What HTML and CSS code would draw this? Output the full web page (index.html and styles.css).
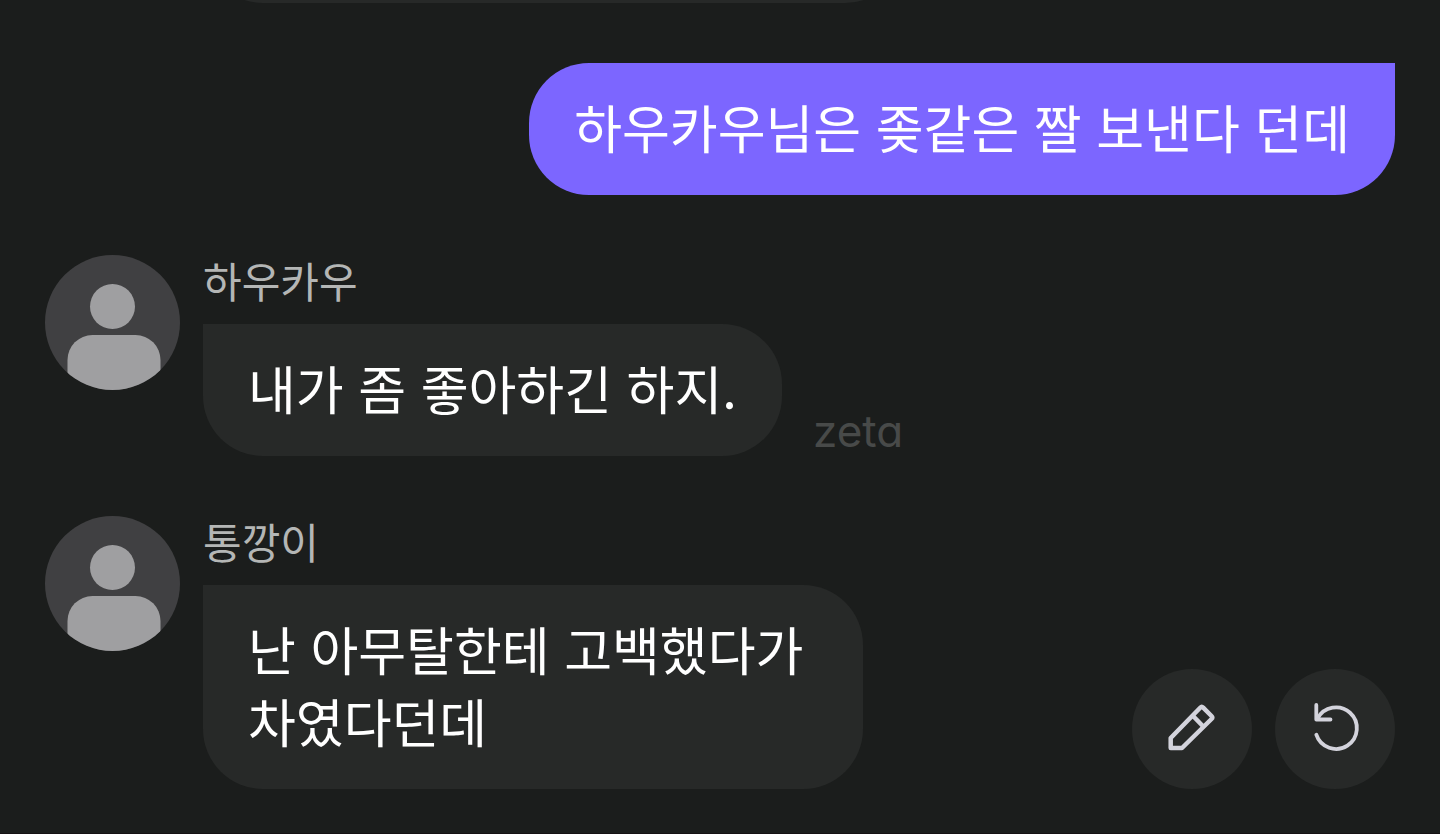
FILE: index.html
```html
<!DOCTYPE html>
<html lang="ko">
<head>
    <meta charset="UTF-8">
    <meta name="viewport" content="width=device-width, initial-scale=1.0">
    <title>zeta</title>
    <link rel="stylesheet" href="styles.css">
</head>
<body>
    <main class="chat">
        <div class="bubble bubble-previous"></div>

        <div class="bubble bubble-mine">하우카우님은 좆같은 짤 보낸다 던데</div>

        <article class="message">
            <svg class="avatar" viewBox="0 0 135 135" aria-hidden="true">
                <circle cx="67.5" cy="51.5" r="22.5"/>
                <rect x="22.5" y="80" width="93" height="80" rx="25"/>
            </svg>
            <div class="content">
                <div class="name">하우카우</div>
                <div class="bubble">내가 좀 좋아하긴 하지.</div>
            </div>
        </article>

        <div class="last-row">
            <article class="message">
                <svg class="avatar" viewBox="0 0 135 135" aria-hidden="true">
                    <circle cx="67.5" cy="51.5" r="22.5"/>
                    <rect x="22.5" y="80" width="93" height="80" rx="25"/>
                </svg>
                <div class="content">
                    <div class="name">통깡이</div>
                    <div class="bubble">난 아무탈한테 고백했다가 차였다던데</div>
                </div>
            </article>
            <div class="actions">
                <button class="action" type="button" aria-label="수정">
                    <svg class="icon icon-edit" viewBox="0 0 120 120" aria-hidden="true">
                        <path d="M38.7 79V69L68.2 38.7q1.5-1.5 3 0L79.5 47q1.5 1.5 0 3L50 79Z"/>
                        <path d="M61.3 47.3L70.3 56.5"/>
                    </svg>
                </button>
                <button class="action" type="button" aria-label="다시 생성">
                    <svg class="icon" viewBox="0 0 120 120" aria-hidden="true">
                        <path d="M41.3 36V50.5H55.5"/>
                        <path d="M42.6 49.5A20.8 20.8 0 1 1 41.3 65.7"/>
                    </svg>
                </button>
            </div>
        </div>

        <div class="watermark">zeta</div>
    </main>
</body>
</html>
```

FILE: styles.css
```css
* {
    box-sizing: border-box;
}
body {
    margin: 0;
    background-color: #1b1d1c;
    color: #ffffff;
    font-family: "Noto Sans CJK KR", sans-serif;
}
.chat {
    position: relative;
    display: flex;
    flex-direction: column;
    justify-content: flex-end;
    gap: 60px;
    height: 100vh;
    padding: 0 45px 44px;
    border-bottom: 1px solid #151113;
    overflow: hidden;
}
.bubble {
    width: fit-content;
    max-width: 660px;
    padding: 28px 45px 32px;
    border-radius: 0 60px 60px 60px;
    background-color: #272928;
    font-size: 52px;
    line-height: 72px;
    word-break: keep-all;
}
.bubble-previous {
    flex-shrink: 0;
    width: 702px;
    max-width: 100%;
    height: 132px;
    margin-left: 158px;
}
.bubble-mine {
    align-self: flex-end;
    max-width: 100%;
    border-radius: 60px 0 60px 60px;
    background-color: #7c66ff;
}
.message {
    display: flex;
    align-items: flex-start;
    gap: 23px;
}
.avatar {
    flex-shrink: 0;
    width: 135px;
    height: 135px;
    border-radius: 50%;
    background-color: #404042;
    fill: #9f9fa1;
}
.content {
    display: flex;
    flex-direction: column;
    gap: 20px;
}
.name {
    color: #b4b6b5;
    font-size: 42px;
    line-height: 49px;
}
.last-row {
    display: flex;
    align-items: flex-end;
    justify-content: space-between;
}
.actions {
    display: flex;
    flex-shrink: 0;
    gap: 23px;
}
.action {
    width: 120px;
    height: 120px;
    padding: 0;
    border: none;
    border-radius: 50%;
    background-color: #272928;
    cursor: pointer;
}
.icon {
    display: block;
    width: 100%;
    height: 100%;
    fill: none;
    stroke: #d3d3dc;
    stroke-width: 3.8;
    stroke-linecap: round;
    stroke-linejoin: round;
}
.icon-edit {
    stroke-width: 4.5;
}
.watermark {
    position: absolute;
    top: 403px;
    left: 813px;
    color: #484a49;
    font-family: Inter, sans-serif;
    font-size: 44px;
    font-feature-settings: "cv11";
    line-height: 56px;
    pointer-events: none;
}
```
